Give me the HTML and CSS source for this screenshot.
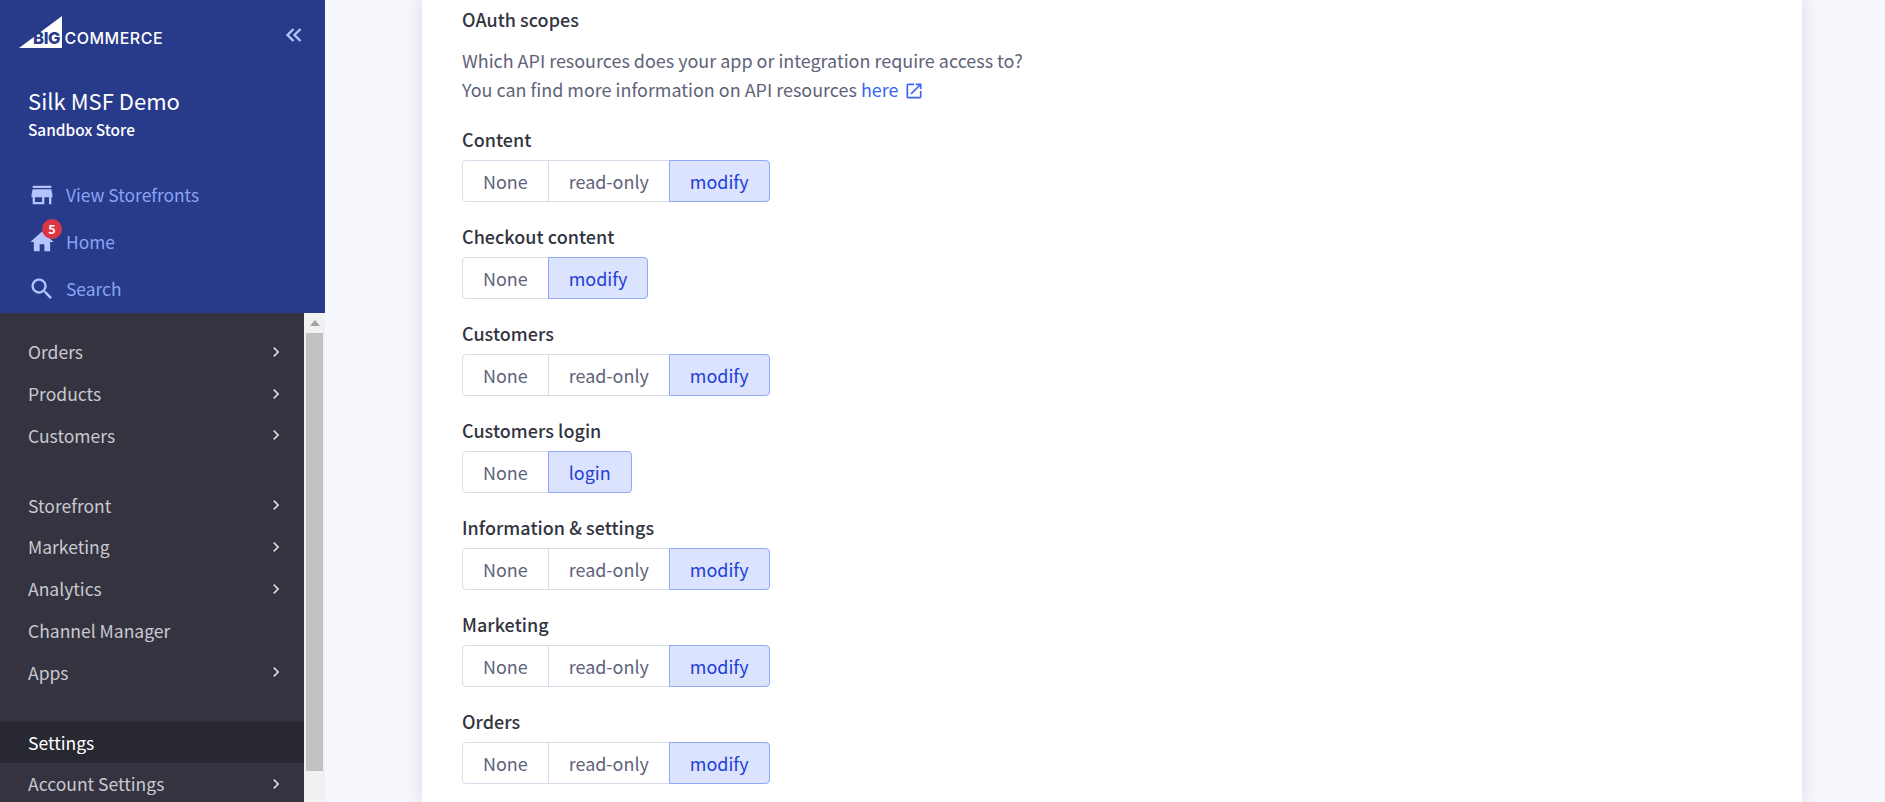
FILE: index.html
```html
<!DOCTYPE html>
<html lang="en">
<head>
<meta charset="utf-8">
<title>OAuth scopes</title>
<link rel="stylesheet" href="styles.css">
</head>
<body>
<div class="app">
  <aside class="sidebar">
    <div class="top">
      <div class="brand">
        <svg class="logo" width="150" height="40" viewBox="0 0 150 40">
          <path d="M0 34 43 2V34Z" fill="#fff"/>
          <text x="14" y="30" class="logo-big">BIG</text>
          <text x="45.500" y="29.500" class="logo-commerce">COMMERCE</text>
        </svg>
        <svg class="collapse" width="18" height="16" viewBox="0 0 18 16"><path d="M8.5 2 2.5 8l6 6M15.500 2l-6 6 6 6" fill="none" stroke="#b3c4ff" stroke-width="2.300"/></svg>
      </div>
      <div class="store">
        <div class="store-name">Silk MSF Demo</div>
        <div class="store-type">Sandbox Store</div>
      </div>
      <ul class="toplinks">
        <li class="toplink"><svg class="topicon" viewBox="0 0 24 24"><path d="M20 4H4v2h16V4zm1 10v-2l-1-5H4l-1 5v2h1v6h10v-6h4v6h2v-6h1zm-9 4H6v-4h6v4z"/></svg>View Storefronts</li>
        <li class="toplink"><span class="iconwrap"><svg class="topicon" viewBox="0 0 24 24"><path d="M10 20v-6h4v6h5v-8h3L12 3 2 12h3v8z"/></svg><span class="badge">5</span></span>Home</li>
        <li class="toplink"><svg class="topicon" viewBox="0 0 24 24"><path d="M15.500 14h-.79l-.28-.27C15.410 12.590 16 11.110 16 9.500 16 5.910 13.090 3 9.500 3S3 5.910 3 9.500 5.910 16 9.500 16c1.610 0 3.090-.59 4.230-1.570l.27.28v.79l5 4.990L20.490 19l-4.990-5zm-6 0C7.010 14 5 11.990 5 9.500S7.010 5 9.500 5 14 7.010 14 9.500 11.990 14 9.500 14z"/></svg>Search</li>
      </ul>
    </div>
    <div class="lower">
      <nav class="nav">
        <ul class="navgroup">
          <li class="navitem">Orders<svg class="chev" viewBox="0 0 24 24"><path d="M10 6 8.590 7.410 13.170 12l-4.580 4.590L10 18l6-6z"/></svg></li>
          <li class="navitem">Products<svg class="chev" viewBox="0 0 24 24"><path d="M10 6 8.590 7.410 13.170 12l-4.580 4.590L10 18l6-6z"/></svg></li>
          <li class="navitem">Customers<svg class="chev" viewBox="0 0 24 24"><path d="M10 6 8.590 7.410 13.170 12l-4.580 4.590L10 18l6-6z"/></svg></li>
        </ul>
        <ul class="navgroup">
          <li class="navitem">Storefront<svg class="chev" viewBox="0 0 24 24"><path d="M10 6 8.590 7.410 13.170 12l-4.580 4.590L10 18l6-6z"/></svg></li>
          <li class="navitem">Marketing<svg class="chev" viewBox="0 0 24 24"><path d="M10 6 8.590 7.410 13.170 12l-4.580 4.590L10 18l6-6z"/></svg></li>
          <li class="navitem">Analytics<svg class="chev" viewBox="0 0 24 24"><path d="M10 6 8.590 7.410 13.170 12l-4.580 4.590L10 18l6-6z"/></svg></li>
          <li class="navitem">Channel Manager</li>
          <li class="navitem">Apps<svg class="chev" viewBox="0 0 24 24"><path d="M10 6 8.590 7.410 13.170 12l-4.580 4.590L10 18l6-6z"/></svg></li>
        </ul>
        <ul class="navgroup">
          <li class="navitem active">Settings</li>
          <li class="navitem">Account Settings<svg class="chev" viewBox="0 0 24 24"><path d="M10 6 8.590 7.410 13.170 12l-4.580 4.590L10 18l6-6z"/></svg></li>
        </ul>
      </nav>
      <div class="scrollbar">
        <span class="arrow"></span>
        <span class="thumb"></span>
      </div>
    </div>
  </aside>
  <main class="main">
    <section class="card">
      <h2 class="heading">OAuth scopes</h2>
      <p class="desc">Which API resources does your app or integration require access to?<br>You can find more information on API resources <a class="link">here<svg class="ext" viewBox="0 0 24 24"><path d="M19 19H5V5h7V3H5c-1.110 0-2 .9-2 2v14c0 1.100.89 2 2 2h14c1.100 0 2-.9 2-2v-7h-2v7zM14 3v2h3.590l-9.830 9.830 1.410 1.410L19 6.410V10h2V3h-7z"/></svg></a></p>
      <div class="scope">
        <div class="label">Content</div>
        <div class="seg"><span class="opt none">None</span><span class="opt ro">read-only</span><span class="opt on">modify</span></div>
      </div>
      <div class="scope">
        <div class="label">Checkout content</div>
        <div class="seg"><span class="opt none">None</span><span class="opt on">modify</span></div>
      </div>
      <div class="scope">
        <div class="label">Customers</div>
        <div class="seg"><span class="opt none">None</span><span class="opt ro">read-only</span><span class="opt on">modify</span></div>
      </div>
      <div class="scope">
        <div class="label">Customers login</div>
        <div class="seg"><span class="opt none">None</span><span class="opt on">login</span></div>
      </div>
      <div class="scope">
        <div class="label">Information &amp; settings</div>
        <div class="seg"><span class="opt none">None</span><span class="opt ro">read-only</span><span class="opt on">modify</span></div>
      </div>
      <div class="scope">
        <div class="label">Marketing</div>
        <div class="seg"><span class="opt none">None</span><span class="opt ro">read-only</span><span class="opt on">modify</span></div>
      </div>
      <div class="scope">
        <div class="label">Orders</div>
        <div class="seg"><span class="opt none">None</span><span class="opt ro">read-only</span><span class="opt on">modify</span></div>
      </div>
    </section>
  </main>
</div>
</body>
</html>
```
FILE: styles.css
```css
* { box-sizing: border-box; }
html, body { margin: 0; height: 802px; overflow: hidden; }
body { font-family: "Noto Sans CJK SC", "Source Sans Pro", "Noto Sans", sans-serif; font-size: 17.960px; background: #f6f7fc; color: #313440; }
ul { list-style: none; margin: 0; padding: 0; }
.app { display: flex; height: 802px; }

.sidebar { width: 325px; flex: none; display: flex; flex-direction: column; height: 802px; }
.top { background: #283a8a; height: 313px; flex: none; padding: 14px 0 0 19px; color: #fff; }
.brand { display: flex; align-items: flex-start; justify-content: space-between; padding-right: 22px; height: 48px; }
.logo { display: block; }
.logo-big { font-family: "Inter", sans-serif; font-weight: 800; font-size: 16.500px; fill: #283a8a; letter-spacing: -0.3px; }
.logo-commerce { font-family: "Inter", sans-serif; font-weight: 500; font-size: 16px; fill: #fff; letter-spacing: 0.5px; }
.collapse { margin-top: 13px; }
.store { padding: 23px 0 0 9px; }
.store-name { font-size: 22px; line-height: 30px; font-weight: 400; letter-spacing: 0.03px; }
.store-type { font-size: 15.400px; line-height: 24px; font-weight: 500; margin-top: 2px; }
.toplinks { margin-top: 30px; margin-left: 10px; }
.toplink { height: 47px; display: flex; align-items: center; color: #89a4f2; font-size: 17.400px; }
.topicon { width: 28px; height: 28px; fill: #b3c4ff; margin-right: 10px; margin-left: -1px; flex: none; display: block; }
.iconwrap { position: relative; display: block; flex: none; height: 28px; }
.badge { position: absolute; left: 13px; top: -9px; width: 20px; height: 20px; border-radius: 50%; background: #db3643; color: #fff; font-size: 12.500px; font-weight: 700; line-height: 20px; text-align: center; }

.lower { flex: 1; display: flex; min-height: 0; }
.nav { width: 304px; background: #34333f; padding-top: 18.600px; overflow: hidden; }
.navgroup { margin-bottom: 28.300px; }
.navitem { height: 41.700px; padding: 0 18px 1px 28px; display: flex; align-items: center; justify-content: space-between; color: #c9c9d1; font-size: 17.500px; }
.navitem.active { background: #282832; color: #fff; }
.chev { width: 20px; height: 20px; fill: #d8d8de; flex: none; }

.scrollbar { width: 21px; background: #f1f1f1; padding: 0 2px 0 2px; display: flex; flex-direction: column; align-items: stretch; }
.arrow { height: 20px; display: block; flex: none; position: relative; }
.arrow::before { content: ""; position: absolute; left: 4px; top: 7px; border-left: 5px solid transparent; border-right: 5px solid transparent; border-bottom: 6px solid #a3a3a3; }
.thumb { height: 438px; background: #c1c1c1; display: block; flex: none; }

.main { flex: 1; padding: 0 83px 0 97px; min-width: 0; }
.card { background: #fff; height: 802px; padding: 6px 32px 0 40px; box-shadow: 0 0 16px rgba(49, 52, 64, 0.14); }
.heading { margin: 0; font-size: 17.960px; line-height: 26px; font-weight: 500; color: #313440; letter-spacing: 0.05px; }
.desc { margin: 14px 0 0; font-size: 17.960px; line-height: 29px; color: #5e637a; }
.link { color: #3c64f4; }
.ext { width: 20px; height: 20px; fill: #3c64f4; vertical-align: -4px; margin-left: 6px; }
.scope { height: 97px; }
.desc + .scope { margin-top: 22px; }
.label { height: 26px; line-height: 26px; font-weight: 500; color: #313440; letter-spacing: 0.05px; }
.seg { display: inline-flex; height: 42px; margin-top: 8px; }
.opt { display: flex; align-items: center; justify-content: center; border: 1px solid #d9dce9; margin-left: -1px; color: #5e637a; background: #fff; padding-bottom: 1px; }
.opt:first-child { margin-left: 0; border-radius: 4px 0 0 4px; }
.opt:last-child { border-radius: 0 4px 4px 0; }
.opt.none { padding-left: 20px; padding-right: 20px; }
.opt.ro { padding-left: 20px; padding-right: 20px; }
.opt.on { padding-left: 20px; padding-right: 20px; background: #dbe3fe; border-color: #8fa9f8; color: #1f3fd6; }
```
